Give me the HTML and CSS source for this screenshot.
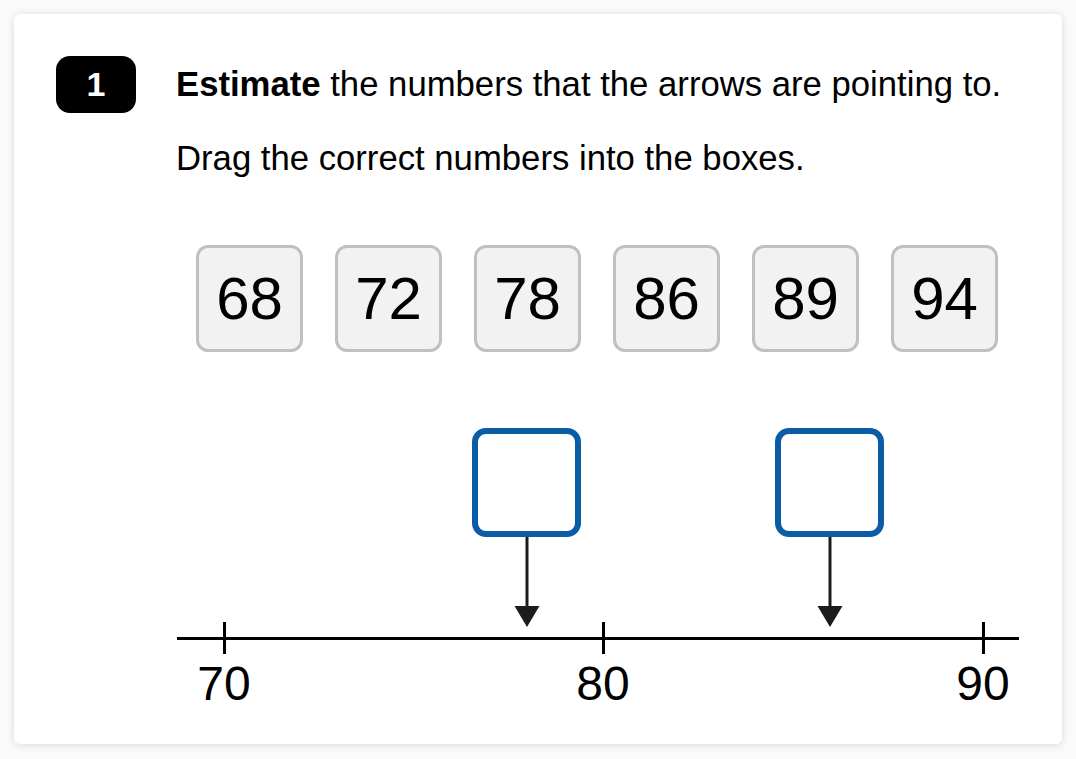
FILE: index.html
```html
<!DOCTYPE html>
<html lang="en">
<head>
    <meta charset="UTF-8">
    <meta name="viewport" content="width=device-width, initial-scale=1.0">
    <title>Question 1</title>
    <link rel="stylesheet" href="styles.css">
</head>
<body>
    <div class="card">
        <!-- Question header -->
        <div class="question">
            <div class="badge">1</div>
            <div class="question-text">
                <p class="prompt"><strong>Estimate</strong> the numbers that the arrows are pointing to.</p>
                <p class="prompt instruction">Drag the correct numbers into the boxes.</p>

                <!-- Number tiles to drag -->
                <div class="tiles">
                    <div class="tile">68</div>
                    <div class="tile">72</div>
                    <div class="tile">78</div>
                    <div class="tile">86</div>
                    <div class="tile">89</div>
                    <div class="tile">94</div>
                </div>

                <!-- Number line with drop boxes -->
                <div class="diagram">
                    <div class="target target-a">
                        <div class="drop-box"></div>
                        <svg class="arrow" width="26" height="91" viewBox="0 0 26 91">
                            <line x1="13" y1="0" x2="13" y2="70" stroke="#1c1c1c" stroke-width="3"/>
                            <polygon points="0.5,69 25.5,69 13,90" fill="#1c1c1c"/>
                        </svg>
                    </div>
                    <div class="target target-b">
                        <div class="drop-box"></div>
                        <svg class="arrow" width="26" height="91" viewBox="0 0 26 91">
                            <line x1="13" y1="0" x2="13" y2="70" stroke="#1c1c1c" stroke-width="3"/>
                            <polygon points="0.5,69 25.5,69 13,90" fill="#1c1c1c"/>
                        </svg>
                    </div>

                    <div class="axis"></div>
                    <div class="tick tick-70"></div>
                    <div class="tick tick-80"></div>
                    <div class="tick tick-90"></div>
                    <div class="label tick-70">70</div>
                    <div class="label tick-80">80</div>
                    <div class="label tick-90">90</div>
                </div>
            </div>
        </div>
    </div>
</body>
</html>
```

FILE: styles.css
```css
/* General Styles */
body {
    font-family: 'Liberation Sans', Arial, sans-serif;
    background-color: #fafafa;
    margin: 0;
    padding: 14px;
    color: #000;
}

.card {
    background-color: white;
    border-radius: 6px;
    box-shadow: 0 1px 8px rgba(0, 0, 0, 0.13);
    width: 1048px;
    height: 730px;
    box-sizing: border-box;
    padding: 42px 0 0 42px;
}

.question {
    display: flex;
    align-items: flex-start;
    gap: 40px;
}

.badge {
    width: 80px;
    height: 57px;
    flex-shrink: 0;
    background-color: #000;
    color: white;
    border-radius: 14px;
    font-size: 34px;
    font-weight: bold;
    display: flex;
    align-items: center;
    justify-content: center;
}

.question-text {
    padding-top: 8px;
}

.prompt {
    margin: 0;
    font-size: 34.7px;
    line-height: 40px;
    white-space: nowrap;
}

.instruction {
    margin-top: 34px;
}

/* Number tiles */
.tiles {
    display: flex;
    gap: 32px;
    margin: 67px 0 0 20px;
}

.tile {
    width: 107px;
    height: 107px;
    box-sizing: border-box;
    border: 3px solid #c0c0c0;
    border-radius: 12px;
    background-color: #f2f2f2;
    font-size: 60px;
    display: flex;
    align-items: center;
    justify-content: center;
}

/* Number line */
.diagram {
    position: relative;
    width: 845px;
    height: 370px;
}

.axis {
    position: absolute;
    left: 1px;
    top: 285px;
    width: 842px;
    height: 3px;
    background-color: #000;
}

.tick {
    position: absolute;
    top: 270px;
    width: 3px;
    height: 32px;
    margin-left: -1px;
    background-color: #000;
}

.label {
    position: absolute;
    top: 308px;
    width: 80px;
    margin-left: -40px;
    text-align: center;
    font-size: 48px;
    line-height: 1;
}

.tick-70 { left: 48px; }
.tick-80 { left: 427px; }
.tick-90 { left: 807px; }

.target {
    position: absolute;
    top: 76px;
    display: flex;
    flex-direction: column;
    align-items: center;
}

/* 78 and 86 on the 70-90 scale */
.target-a { left: 296px; }
.target-b { left: 599px; }

.drop-box {
    width: 109px;
    height: 109px;
    box-sizing: border-box;
    border: 6px solid #0b5ca6;
    border-radius: 14px;
    background-color: white;
}

.arrow {
    display: block;
    margin-left: 1px;
}
```
